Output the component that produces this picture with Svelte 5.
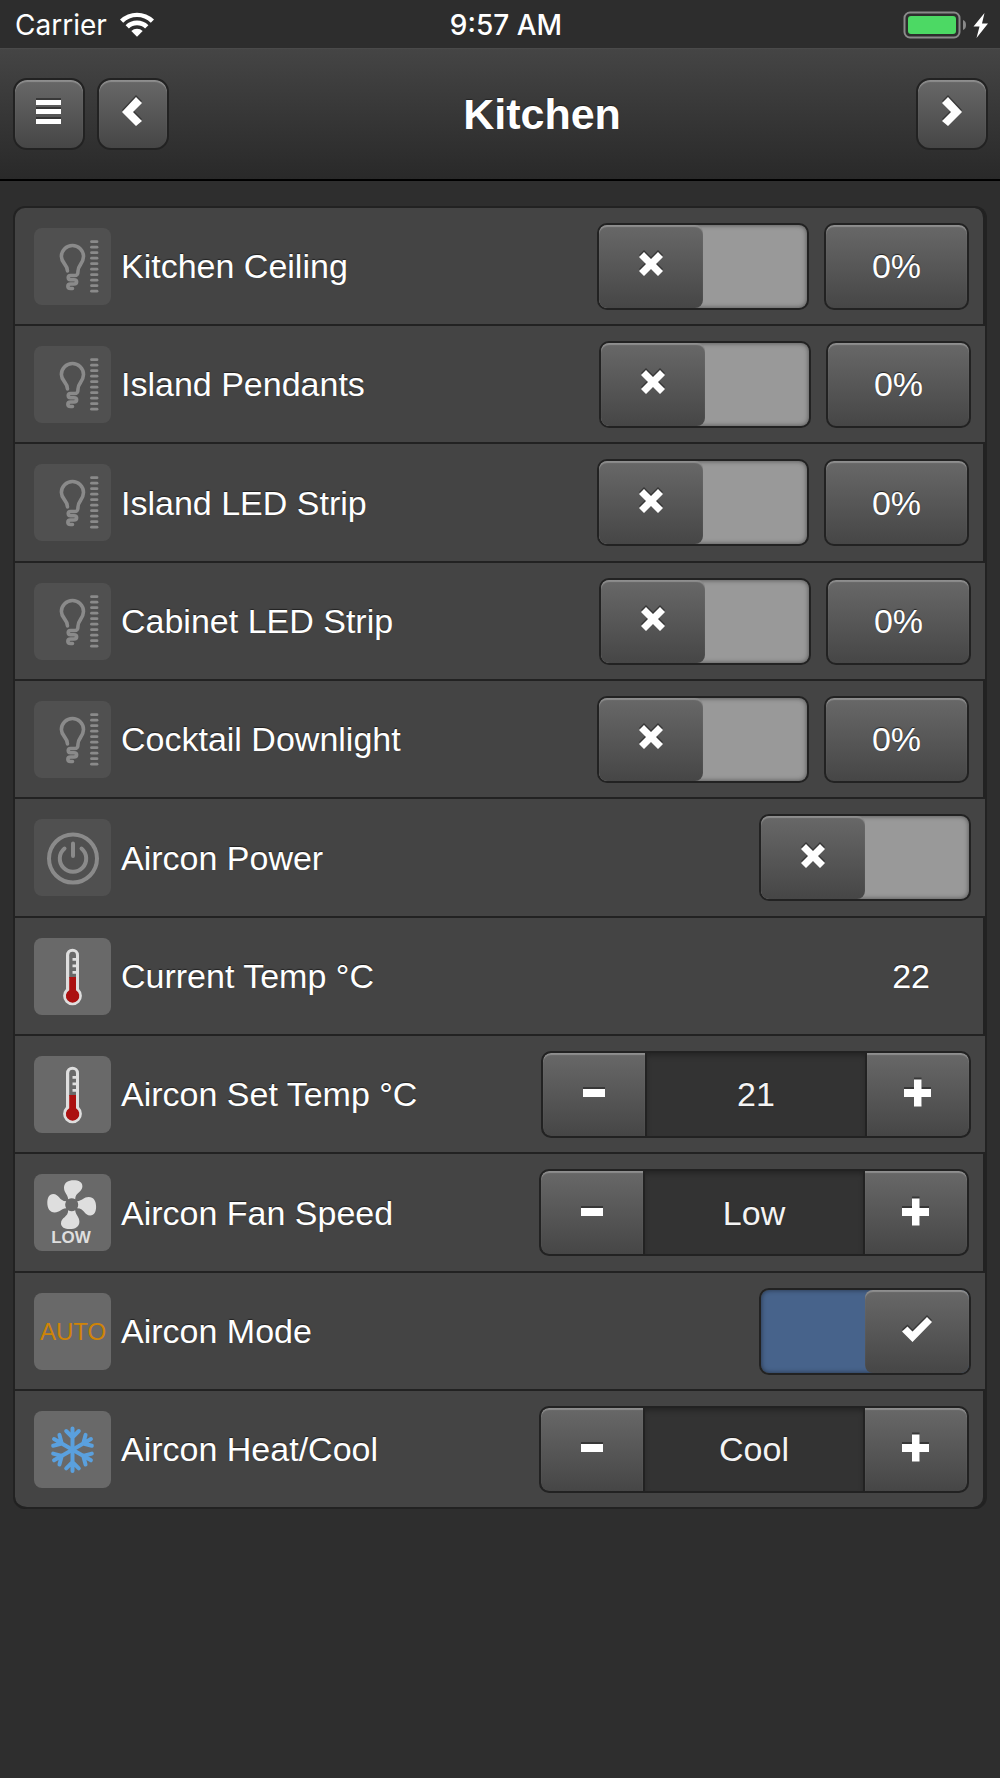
<script>
  let rows = $state([
    { label: 'Kitchen Ceiling', icon: 'bulb', type: 'dimmer', on: false, level: 0 },
    { label: 'Island Pendants', icon: 'bulb', type: 'dimmer', on: false, level: 0 },
    { label: 'Island LED Strip', icon: 'bulb', type: 'dimmer', on: false, level: 0 },
    { label: 'Cabinet LED Strip', icon: 'bulb', type: 'dimmer', on: false, level: 0 },
    { label: 'Cocktail Downlight', icon: 'bulb', type: 'dimmer', on: false, level: 0 },
    { label: 'Aircon Power', icon: 'power', type: 'switch', on: false },
    { label: 'Current Temp °C', icon: 'thermo', type: 'value', value: '22' },
    { label: 'Aircon Set Temp °C', icon: 'thermo', type: 'stepper', value: '21' },
    { label: 'Aircon Fan Speed', icon: 'fan', type: 'stepper', value: 'Low' },
    { label: 'Aircon Mode', icon: 'auto', type: 'switch', on: true },
    { label: 'Aircon Heat/Cool', icon: 'snow', type: 'stepper', value: 'Cool' }
  ]);

  const options = { 'Aircon Fan Speed': ['Low', 'Medium', 'High'], 'Aircon Heat/Cool': ['Cool', 'Heat'] };

  function step(row, by) {
    const list = options[row.label];
    if (list) {
      const next = list.indexOf(row.value) + by;
      if (list[next]) row.value = list[next];
    } else {
      row.value = String(Number(row.value) + by);
    }
  }

  const glyphs = {
    menu: 'M2 4H27V9H2ZM2 13H27V18H2ZM2 23H27V28H2Z',
    left: 'M18 1L24 7L15 16L24 25L18 30L4 16Z',
    right: 'M11 1L5 7L14 16L5 25L11 30L25 16Z',
    cross: 'M8 4L15 11L22 4L27 9L20 16L27 23L22 28L15 21L8 28L3 23L10 16L3 9Z',
    check: 'M25 4L30 9L10.500 29L0 18.500L5.500 13.500L10.500 18.500Z',
    minus: 'M4 12H26V20H4Z',
    plus: 'M11 2.500H18.500V12H28V20H18.500V29.500H11V20H1V12H11Z'
  };
</script>

{#snippet glyph(name)}
  <svg class="glyph" viewBox="0 0 30 32" aria-hidden="true"><path d={glyphs[name]} /></svg>
{/snippet}

{#snippet toggle(row, i)}
  <span class="switch">
    <input id="control-{i}" type="checkbox" role="switch" bind:checked={row.on} />
    <span class="thumb">{@render glyph(row.on ? 'check' : 'cross')}</span>
  </span>
{/snippet}

{#snippet picture(name)}
  <svg class="tile" class:dim={name === 'bulb' || name === 'power'} viewBox="0 0 77 77" aria-hidden="true">
    {#if name === 'bulb'}
      <g class="line">
        <path d="M33.500 43C33.500 36 27.400 35.500 27.400 28.500A11 11 0 0 1 49.500 28.500C49.500 35.500 44 37 44 43C44 46.500 43 47.500 40.500 47.500H36.500C33.500 47.500 33.500 51.700 36.500 51.700H40C43.500 51.700 43.500 56 40 56H36.500C33 56 33 60.500 36.500 60.500H38.500" />
        {#each Array(10) as _, n}
          <path class="tick" d="M57.500 {13.7 + n * 5.5}H63" />
        {/each}
      </g>
    {:else if name === 'power'}
      <g class="line thick">
        <circle cx="39" cy="39.500" r="24" />
        <path d="M30.500 29.500A13.200 13.200 0 1 0 47.500 29.500M39 24.500V37" />
      </g>
    {:else if name === 'thermo'}
      <path class="light" d="M32 17.200A6.500 6.500 0 0 1 45 17.200V51A9.400 9.400 0 1 1 32 51Z" />
      <path class="hollow" d="M35.200 40V17.200A3.400 3.400 0 0 1 42 17.200V40Z" />
      <path class="red" d="M35.200 39H42V52.200A6.700 6.700 0 1 1 35.200 52.200Z" />
      <path class="light" d="M38.500 20H43V22.800H38.500ZM38.500 26.400H43V29.200H38.500ZM38.500 33H43V35.800H38.500Z" />
    {:else if name === 'fan'}
      <g transform="translate(37.700 30.700)">
        {#each [0, 90, 180, 270] as turn}
          <path
            class="light"
            transform="rotate({turn})"
            d="M-3.500 -5.500C-4 -10.500 -7.700 -12 -7.700 -17C-7.700 -22 -3.500 -24.400 2 -24.400C7 -24.400 10.700 -22.500 10.700 -18.500C10.700 -12.500 3.500 -12.500 3.500 -5.500A7 7 0 0 0 -3.500 -5.500Z"
          />
        {/each}
        <circle class="hub" r="5.800" />
      </g>
      <text class="low" x="37" y="69">LOW</text>
    {:else if name === 'auto'}
      <text class="auto" x="39" y="47">AUTO</text>
    {:else}
      <g transform="translate(38.500 38.700)">
        {#each [0, 60, 120, 180, 240, 300] as turn}
          <path class="flake" transform="rotate({turn})" d="M0 0V-21.300M-6.300 -18.700L0 -12.400L6.300 -18.700" />
        {/each}
      </g>
    {/if}
  </svg>
{/snippet}

<div class="screen">
  <div class="status">
    <div class="carrier">
      <span>Carrier</span>
      <svg class="wifi" viewBox="0 0 34 26" role="img" aria-label="Wi-Fi">
        <path d="M0 7.500A24.500 24.500 0 0 1 34 7.500L30.800 10.800A19.600 19.600 0 0 0 3.200 10.800Z" />
        <path d="M5.600 13.200A16.300 16.300 0 0 1 28.400 13.200L25.100 16.500A11.600 11.600 0 0 0 8.900 16.500Z" />
        <path d="M11.300 19A8.400 8.400 0 0 1 22.700 19L17 24.800Z" />
      </svg>
    </div>
    <span class="time">9:57 AM</span>
    <svg class="battery" viewBox="0 0 86 28" role="img" aria-label="Battery charging">
      <rect class="shell" x="1.500" y="1.500" width="55" height="25" rx="5.500" />
      <rect class="charge" x="5" y="5" width="48" height="18" rx="3" />
      <path class="nub" d="M60 9C64 10 64 18 60 19Z" />
      <path class="bolt" d="M81.500 2L70.500 15.500H76.500L73.500 27L85 12.500H79Z" />
    </svg>
  </div>

  <header>
    <nav>
      <button type="button" class="raised square" aria-label="Menu">{@render glyph('menu')}</button>
      <button type="button" class="raised square" aria-label="Previous room">{@render glyph('left')}</button>
    </nav>
    <h1>Kitchen</h1>
    <nav class="end">
      <button type="button" class="raised square" aria-label="Next room">{@render glyph('right')}</button>
    </nav>
  </header>

  <main>
    <ul>
      {#each rows as row, i}
        <li>
          {@render picture(row.icon)}
          {#if row.type === 'value'}
            <span class="label">{row.label}</span>
            <span class="reading">{row.value}</span>
          {:else}
            <label class="label" for="control-{i}">{row.label}</label>
            {#if row.type === 'stepper'}
              <div class="stepper">
                <button type="button" aria-label="Decrease" onclick={() => step(row, -1)}>{@render glyph('minus')}</button>
                <input id="control-{i}" type="text" readonly value={row.value} />
                <button type="button" aria-label="Increase" onclick={() => step(row, 1)}>{@render glyph('plus')}</button>
              </div>
            {:else}
              {@render toggle(row, i)}
              {#if row.type === 'dimmer'}
                <button type="button" class="raised level">{row.level}%</button>
              {/if}
            {/if}
          {/if}
        </li>
      {/each}
    </ul>
  </main>
</div>

<style>
  :global(body) {
    margin: 0;
    background: #2e2e2e;
  }

  .screen {
    min-height: 100vh;
    color: #fff;
    font: 34px/40px 'Liberation Sans', Arial, sans-serif;
    text-shadow: 0 -1px 1px #222;
  }

  button,
  input {
    margin: 0;
    padding: 0;
    font: inherit;
    color: inherit;
    text-shadow: inherit;
  }

  .status {
    box-sizing: border-box;
    display: grid;
    grid-template-columns: 1fr auto 1fr;
    align-items: center;
    height: 48px;
    padding: 2px 11px 0 15px;
    background: #2d2d2d;
    font: 28px/32px Inter, sans-serif;
    text-shadow: none;
  }

  .carrier {
    display: flex;
    align-items: center;
    gap: 13px;
  }

  .wifi {
    width: 34px;
    height: 26px;
    fill: #fff;
  }

  .time {
    padding-left: 8px;
    font-weight: 500;
  }

  .battery {
    justify-self: end;
    width: 86px;
    height: 28px;
  }

  .shell {
    fill: none;
    stroke: #8a8a8a;
    stroke-width: 2;
  }

  .charge {
    fill: #4cd964;
  }

  .nub {
    fill: #8a8a8a;
  }

  .bolt {
    fill: #fff;
  }

  header {
    display: grid;
    grid-template-columns: 1fr auto 1fr;
    align-items: center;
    height: 131px;
    padding: 0 12px 0 13px;
    border-bottom: 2px solid #000;
    background: linear-gradient(#454545, #292929);
    box-shadow: inset 0 1px #4a4a4a;
  }

  nav {
    display: flex;
    gap: 12px;
  }

  .end {
    justify-content: flex-end;
  }

  h1 {
    margin: 0;
    padding-left: 83px;
    font-size: 43px;
    line-height: 52px;
  }

  .raised {
    box-sizing: border-box;
    border: 2px solid #222;
    border-radius: 10px;
    background: linear-gradient(#686868, #464646);
    box-shadow: inset 0 2px 1px rgba(255, 255, 255, 0.25);
  }

  .square {
    display: grid;
    place-items: center;
    width: 72px;
    height: 72px;
    padding-bottom: 4px;
    border-radius: 14px;
  }

  .glyph {
    width: 30px;
    height: 32px;
    fill: #fff;
    filter: drop-shadow(0 -2px 0 rgba(40, 40, 40, 0.7));
  }

  main {
    padding: 25px 13px;
  }

  ul {
    display: grid;
    grid-auto-rows: 118px 118px 119px;
    margin: 0;
    padding: 0;
    border: 2px solid #222;
    border-bottom: 0;
    border-radius: 12px;
    background: #222;
    list-style: none;
    overflow: hidden;
  }

  li {
    display: flex;
    align-items: center;
    padding: 0 14px 0 19px;
    border-bottom: 2px solid #222;
    background: #444;
  }

  li:nth-child(odd) {
    border-right: 2px solid #222;
  }

  li:first-child {
    border-top-right-radius: 10px;
  }

  li:last-child {
    border-radius: 0 0 12px 12px;
  }

  .label {
    flex: 1;
    padding-left: 10px;
  }

  .reading {
    padding-right: 39px;
  }

  .switch {
    box-sizing: border-box;
    display: grid;
    grid-template-columns: 1fr 1fr;
    width: 212px;
    height: 87px;
    border: 2px solid #222;
    border-radius: 10px;
    overflow: hidden;
  }

  .switch input {
    grid-area: 1 / 1 / 2 / 3;
    appearance: none;
    width: 100%;
    height: 100%;
    border-radius: 8px;
    background: #999;
    box-shadow: inset 0 0 5px rgba(0, 0, 0, 0.5);
  }

  .switch input:checked {
    background: #47638b;
  }

  .thumb {
    grid-area: 1 / 1;
    display: grid;
    place-items: center;
    padding-bottom: 4px;
    border-radius: 8px;
    background: linear-gradient(#686868, #464646);
    box-shadow: inset 0 2px 1px rgba(255, 255, 255, 0.25);
    pointer-events: none;
  }

  .switch input:checked + .thumb {
    grid-area: 1 / 2;
  }

  .level {
    width: 145px;
    height: 87px;
    margin-left: 15px;
  }

  .stepper {
    box-sizing: border-box;
    display: grid;
    grid-template-columns: 102px 218px 102px;
    gap: 2px;
    height: 87px;
    border: 2px solid #222;
    border-radius: 10px;
    background: #222;
    overflow: hidden;
  }

  .stepper button {
    display: grid;
    place-items: center;
    padding-bottom: 2px;
    border: 0;
    background: linear-gradient(#686868, #464646);
    box-shadow: inset 0 2px 1px rgba(255, 255, 255, 0.25);
  }

  .stepper button:first-child {
    border-radius: 8px 0 0 8px;
  }

  .stepper button:last-child {
    border-radius: 0 8px 8px 0;
  }

  .stepper input {
    width: 100%;
    box-sizing: border-box;
    border: 0;
    background: #333;
    box-shadow: inset 0 4px 6px -2px rgba(0, 0, 0, 0.35);
    color: #f4f4f4;
    text-align: center;
  }

  .tile {
    flex: none;
    width: 77px;
    height: 77px;
    border-radius: 8px;
    background: #696969;
    text-shadow: none;
  }

  .dim {
    background: #505050;
  }

  .line {
    fill: none;
    stroke: #8a8a8a;
    stroke-width: 3.6;
    stroke-linecap: round;
    stroke-linejoin: round;
  }

  .thick {
    stroke-width: 4;
  }

  .tick {
    stroke-width: 2.8;
  }

  .light {
    fill: #dedede;
  }

  .hollow,
  .hub {
    fill: #696969;
  }

  .red {
    fill: #ab1010;
  }

  .low {
    fill: #dedede;
    font-size: 17px;
    font-weight: 700;
    text-anchor: middle;
  }

  .auto {
    fill: #cf8406;
    font-size: 24px;
    text-anchor: middle;
  }

  .flake {
    fill: none;
    stroke: #5aa0de;
    stroke-width: 4;
    stroke-linecap: round;
  }
</style>
